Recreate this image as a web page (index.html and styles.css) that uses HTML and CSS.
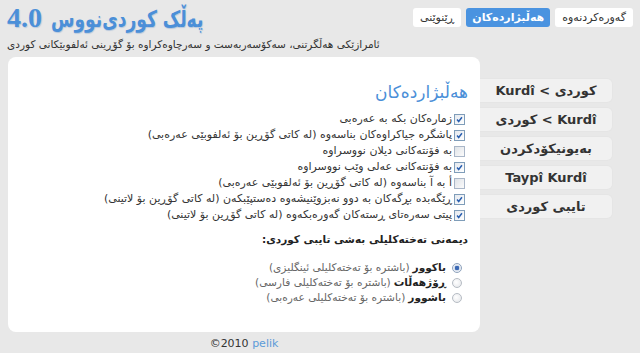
FILE: index.html
```html
<!DOCTYPE html>
<html lang="ckb">
<head>
<meta charset="utf-8">
<title>پەڵک کوردی‌نووس 4.0</title>
<link rel="stylesheet" href="styles.css">
</head>
<body>
<div class="header">
  <div class="brand">
    <h1 class="title" dir="rtl"><span class="name">پەڵک کوردی‌نووس</span> <span class="ver">4.0</span></h1>
    <p class="subtitle" dir="rtl">ئامرازێکی هەڵگرتنی، سەکۆسەربەست و سەرچاوەکراوە بۆ گۆڕینی ئەلفوبێکانی کوردی</p>
  </div>
  <div class="tabs">
    <span class="tab" dir="rtl">ڕێنوێنی</span>
    <span class="tab active" dir="rtl">هەڵبژاردەکان</span>
    <span class="tab" dir="rtl">گەورەکردنەوە</span>
  </div>
</div>
<div class="main">
  <div class="panel" dir="rtl">
    <h2 class="heading">هەڵبژاردەکان</h2>
    <ul class="checks">
      <li><span class="box on"><svg viewBox="0 0 11 11"><path d="M2.5 5.5 L4.5 8 L8.5 2.8" /></svg></span>زمارەکان بکە بە عەرەبی</li>
      <li><span class="box on"><svg viewBox="0 0 11 11"><path d="M2.5 5.5 L4.5 8 L8.5 2.8" /></svg></span>پاشگرە جیاکراوەکان بناسەوە (لە کاتی گۆڕین بۆ ئەلفوبێی عەرەبی)</li>
      <li><span class="box"></span>بە فۆنتەکانی دیلان نووسراوە</li>
      <li><span class="box on"><svg viewBox="0 0 11 11"><path d="M2.5 5.5 L4.5 8 L8.5 2.8" /></svg></span>بە فۆنتەکانی عەلی وێب نووسراوە</li>
      <li><span class="box"></span>أ بە آ بناسەوە (لە کاتی گۆڕین بۆ ئەلفوبێی عەرەبی)</li>
      <li><span class="box on"><svg viewBox="0 0 11 11"><path d="M2.5 5.5 L4.5 8 L8.5 2.8" /></svg></span>ڕێگەبدە بڕگەکان بە دوو نەبزوێنیشەوە دەستپێبکەن (لە کاتی گۆڕین بۆ لاتینی)</li>
      <li><span class="box on"><svg viewBox="0 0 11 11"><path d="M2.5 5.5 L4.5 8 L8.5 2.8" /></svg></span>پیتی سەرەتای ڕستەکان گەورەبکەوە (لە کاتی گۆڕین بۆ لاتینی)</li>
    </ul>
    <h3 class="subheading">دیمەنی تەختەکلیلی بەشی تایبی کوردی:</h3>
    <ul class="radios">
      <li><span class="radio on"></span><b>باکوور</b> <span class="note">(باشترە بۆ تەختەکلیلی ئینگلیزی)</span></li>
      <li><span class="radio"></span><b>ڕۆژهەڵات</b> <span class="note">(باشترە بۆ تەختەکلیلی فارسی)</span></li>
      <li><span class="radio"></span><b>باشوور</b> <span class="note">(باشترە بۆ تەختەکلیلی عەرەبی)</span></li>
    </ul>
  </div>
  <div class="side" dir="rtl">
    <div class="btn">کوردی &gt; Kurdî</div>
    <div class="btn">Kurdî &gt; کوردی</div>
    <div class="btn">بەیونیکۆدکردن</div>
    <div class="btn">Taypî Kurdî</div>
    <div class="btn">تایبی کوردی</div>
  </div>
</div>
<div class="footer">©2010 <span class="link">pelik</span></div>
</body>
</html>
```
FILE: styles.css
```css
html, body {
  margin: 0;
  padding: 0;
}
body {
  width: 640px;
  height: 353px;
  overflow: hidden;
  background: #e8e8e8;
  font-family: "DejaVu Sans", sans-serif;
  font-size: 11px;
  color: #333;
}
.header {
  display: flex;
  justify-content: space-between;
  align-items: flex-start;
  padding: 3px 7px 0 7px;
  height: 54px;
  box-sizing: border-box;
}
.brand {
  display: flex;
  flex-direction: column;
  align-items: flex-start;
}
.title {
  margin: 0;
  font-size: 26px;
  line-height: 30px;
  font-weight: bold;
  color: #4b8fd8;
  text-shadow: 1px 1px 1px #b8c8dc;
  white-space: nowrap;
}
.name {
  display: inline-block;
  font-family: "DejaVu Sans", sans-serif;
  font-size: 23px;
  transform: scaleX(0.74);
  transform-origin: left center;
}
.ver {
  font-family: "Liberation Serif", serif;
  font-size: 28px;
}
.subtitle {
  margin: 2px 0 0 0;
  font-size: 10.5px;
  line-height: 16px;
  color: #333;
}
.tabs {
  display: flex;
  gap: 5px;
  margin-top: 5px;
}
.tab {
  background: #fff;
  border-radius: 3px;
  padding: 0 7px;
  height: 19px;
  line-height: 19px;
  font-size: 11px;
  color: #333;
}
.tab.active {
  background: #4a93e0;
  color: #fff;
  font-weight: bold;
  padding: 0 6px;
}
.main {
  display: flex;
  align-items: flex-start;
  padding-left: 8px;
  margin-top: 3px;
}
.panel {
  width: 472px;
  height: 275px;
  box-sizing: border-box;
  background: #fff;
  border-radius: 8px;
  padding: 24px 12px 0 12px;
}
.heading {
  margin: 0;
  font-size: 17px;
  line-height: 22px;
  font-weight: normal;
  color: #4b8fd8;
}
.checks, .radios {
  list-style: none;
  margin: 0;
  padding: 0;
}
.checks {
  margin-top: 8px;
  padding-right: 3px;
}
.checks li {
  display: flex;
  align-items: center;
  height: 16px;
  line-height: 16px;
  white-space: nowrap;
}
.box {
  flex: none;
  width: 11px;
  height: 11px;
  box-sizing: border-box;
  border: 1px solid #a9b6c8;
  background: linear-gradient(135deg, #dfe3e8, #fbfbfb);
  margin-left: 2px;
  display: flex;
}
.box.on {
  border-color: #7f9db9;
  background: linear-gradient(135deg, #e4e8ee, #ffffff);
}
.box svg {
  width: 9px;
  height: 9px;
}
.box path {
  fill: none;
  stroke: #2a5fb0;
  stroke-width: 1.8;
}
.subheading {
  margin: 8px 0 0 0;
  font-size: 10.5px;
  line-height: 16px;
  font-weight: bold;
  color: #222;
}
.radios {
  margin-top: 13px;
  padding-right: 6px;
}
.radios li {
  display: flex;
  align-items: center;
  height: 15px;
  line-height: 15px;
  white-space: nowrap;
  font-size: 10.6px;
}
.radios b {
  color: #222;
  margin-left: 3px;
}
.radio {
  flex: none;
  width: 10px;
  height: 10px;
  box-sizing: border-box;
  border-radius: 50%;
  border: 1px solid #b6bcc4;
  background: radial-gradient(circle at 40% 40%, #fff, #e2e4e8);
  margin-left: 6px;
}
.radio.on {
  border-color: #8ea2bc;
  background: radial-gradient(circle, #3b68b4 0 2px, #cfdaea 2.5px, #f4f6fa 4px);
}
.note {
  color: #666;
  font-size: 10.6px;
}
.side {
  width: 133px;
  margin-top: 21px;
  display: flex;
  flex-direction: column;
  gap: 4px;
}
.btn {
  height: 25px;
  box-sizing: border-box;
  line-height: 23px;
  text-align: center;
  background: #f1f1f1;
  border: 1px solid #e5e5e5;
  border-left: none;
  border-radius: 0 6px 6px 0;
  font-size: 13px;
  font-weight: bold;
  color: #333;
}
.footer {
  width: 472px;
  margin-left: 8px;
  margin-top: 4px;
  text-align: center;
  font-size: 11px;
  line-height: 16px;
  color: #333;
}
.link {
  color: #5b9bd8;
}
```
